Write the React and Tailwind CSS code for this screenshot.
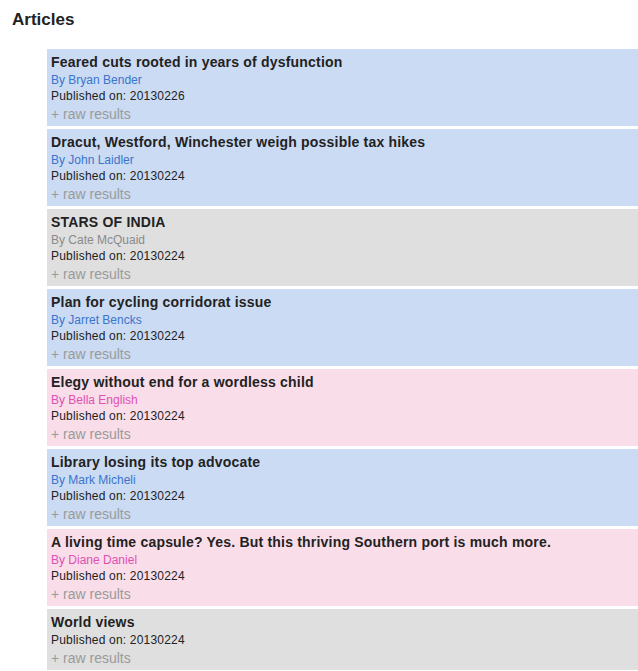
import React from "react";

const articles = [
  { title: "Feared cuts rooted in years of dysfunction", author: "Bryan Bender", date: "20130226", tone: "blue" },
  { title: "Dracut, Westford, Winchester weigh possible tax hikes", author: "John Laidler", date: "20130224", tone: "blue" },
  { title: "STARS OF INDIA", author: "Cate McQuaid", date: "20130224", tone: "gray" },
  { title: "Plan for cycling corridorat issue", author: "Jarret Bencks", date: "20130224", tone: "blue" },
  { title: "Elegy without end for a wordless child", author: "Bella English", date: "20130224", tone: "pink" },
  { title: "Library losing its top advocate", author: "Mark Micheli", date: "20130224", tone: "blue" },
  { title: "A living time capsule? Yes. But this thriving Southern port is much more.", author: "Diane Daniel", date: "20130224", tone: "pink" },
  { title: "World views", author: null, date: "20130224", tone: "gray" },
];

const tones = {
  blue: { card: "bg-[#cadbf3]", author: "text-[#3a74cc]" },
  pink: { card: "bg-[#f9dde8]", author: "text-[#e050b4]" },
  gray: { card: "bg-[#dfdfdf]", author: "text-[#8a8a8a]" },
};

const ArticleCard = ({ article }) => {
  const tone = tones[article.tone];
  return (
    <div className={`${tone.card} pl-[4px] pt-[4px] pb-[3px]`}>
      <div className="text-[14px] leading-[19px] font-bold tracking-[0.2px] text-[#222]">{article.title}</div>
      {article.author && (
        <div className={`text-[12px] leading-[16px] ${tone.author}`}>By {article.author}</div>
      )}
      <div className="text-[12px] leading-[17px] tracking-[0.2px] text-[#222]">Published on: {article.date}</div>
      <div className="text-[14px] leading-[18px] text-[#9a9a9a]">+ raw results</div>
    </div>
  );
};

export default function App() {
  return (
    <div className="bg-white min-h-[671px] font-['Liberation_Sans',Arial,sans-serif]">
      <h2 className="pl-[12px] pt-[10px] text-[17px] leading-[20px] font-bold text-[#222]">Articles</h2>
      <div className="ml-[47px] mt-[19px] flex flex-col gap-[3px]">
        {articles.map((a, i) => (
          <ArticleCard key={i} article={a} />
        ))}
      </div>
    </div>
  );
}
